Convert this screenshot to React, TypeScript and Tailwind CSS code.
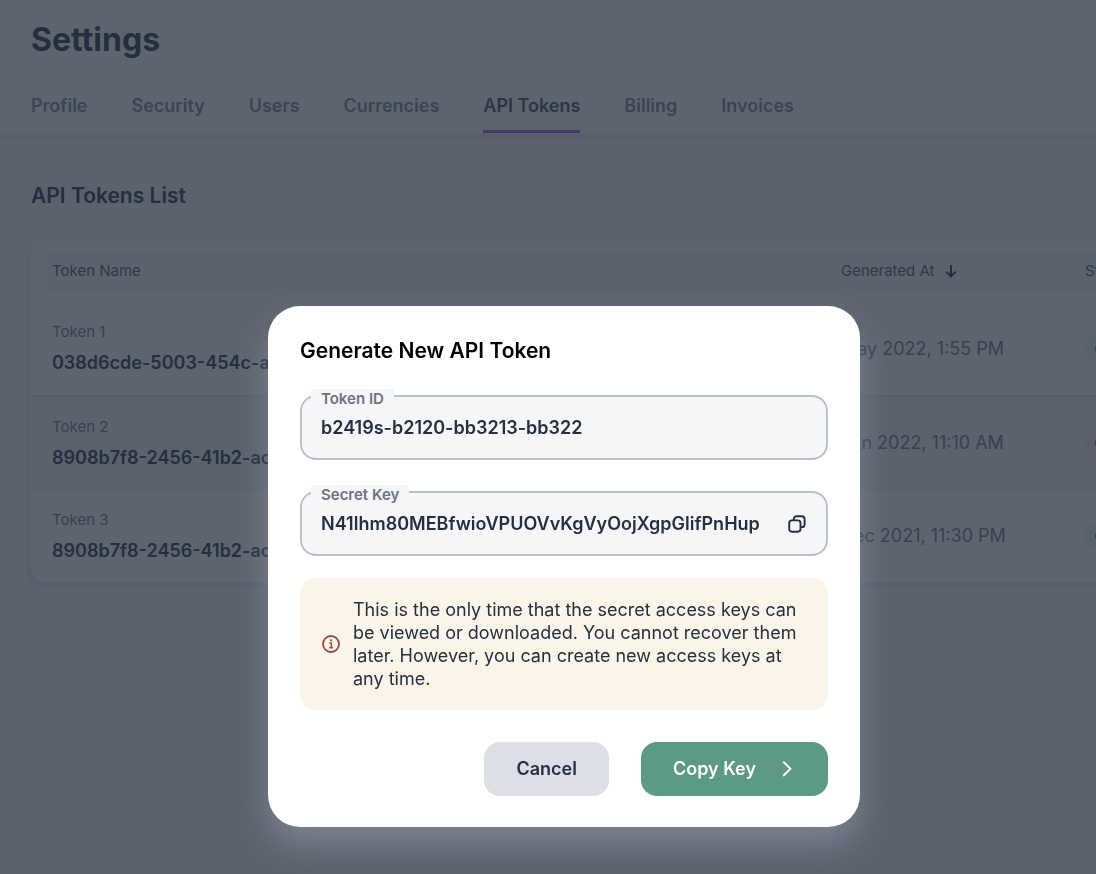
import React, { useState } from "react";

const tabs = ["Profile", "Security", "Users", "Currencies", "API Tokens", "Billing", "Invoices"];

const tokens = [
  { name: "Token 1", id: "038d6cde-5003-454c-a7", date: "May 2022, 1:55 PM", status: "Active" },
  { name: "Token 2", id: "8908b7f8-2456-41b2-ac", date: "Jan 2022, 11:10 AM", status: "Expired" },
  { name: "Token 3", id: "8908b7f8-2456-41b2-ac", date: "Dec 2021, 11:30 PM", status: "Active" },
];

function SortArrow() {
  return (
    <svg className="h-[14px] w-3" viewBox="0 0 12 14" fill="none" stroke="currentColor" strokeWidth="2" aria-hidden="true">
      <path d="M6 1v11.2M1.3 7.8 6 12.4l4.7-4.6" />
    </svg>
  );
}

function CopyIcon() {
  return (
    <svg className="size-[18px]" viewBox="0 0 18 18" fill="none" stroke="currentColor" strokeWidth="1.9" aria-hidden="true">
      <rect x="1.2" y="5.4" width="11.3" height="11.3" rx="2.6" />
      <path d="M5.8 5.4V4a2.7 2.7 0 0 1 2.7-2.7h5.2A2.9 2.9 0 0 1 16.6 4.2v5.2a2.7 2.7 0 0 1-2.7 2.7h-1.4" />
    </svg>
  );
}

function InfoIcon() {
  return (
    <svg className="size-[18px] shrink-0 text-[#964b40]" viewBox="0 0 18 18" fill="none" stroke="currentColor" aria-hidden="true">
      <circle cx="9" cy="9" r="8" strokeWidth="1.8" />
      <path d="M7.3 8h2v4.6M7.2 12.8h3.8" strokeWidth="1.5" />
      <circle cx="9" cy="5.3" r="1.1" fill="currentColor" stroke="none" />
    </svg>
  );
}

function Field({ id, label, value, children }: { id: string; label: string; value: string; children?: React.ReactNode }) {
  return (
    <div className="relative flex h-[65px] items-center rounded-2xl border-2 border-[#bbc1cb] bg-[#f5f6f8] pr-5 pl-[19px]">
      <label htmlFor={id} className="absolute -top-2 left-[9px] bg-[#f5f6f8] px-[10px] text-[15px] leading-5 font-semibold text-[#6b7482]">
        {label}
      </label>
      <input id={id} readOnly value={value} className="min-w-0 flex-1 bg-transparent text-lg font-semibold text-[#252f42] outline-none" />
      {children}
    </div>
  );
}

export default function App() {
  const [active, setActive] = useState("API Tokens");
  return (
    <div className="min-h-screen overflow-hidden bg-[#f5f6f8] font-['Inter',sans-serif] text-[#253044]">
      <header className="bg-white px-[31px] pt-5 shadow-[0_5px_0_#ebebf4]">
        <h1 className="text-[32px] leading-10 font-bold">Settings</h1>
        <nav className="mt-[34px] flex gap-11">
          {tabs.map((t) => (
            <button
              key={t}
              type="button"
              onClick={() => setActive(t)}
              className={
                t === active
                  ? "border-b-3 border-[#9155d8] pb-3 text-lg leading-6 font-semibold text-[#3f4a5c]"
                  : "border-b-3 border-transparent pb-3 text-lg leading-6 font-semibold text-[#788292]"
              }
            >
              {t}
            </button>
          ))}
        </nav>
      </header>

      <main className="pt-[49px] pl-[31px]">
        <h2 className="text-[21px] leading-7 font-semibold">API Tokens List</h2>
        <div className="mt-[30px] w-[1300px] overflow-hidden rounded-2xl bg-white shadow-[-5px_5px_0_#ebebf4]">
          <table className="w-full table-fixed border-collapse text-left">
            <colgroup>
              <col className="w-[810px]" />
              <col className="w-[244px]" />
              <col />
            </colgroup>
            <thead className="text-[15px] text-[#4a5464]">
              <tr>
                <th className="py-[11px] pl-[10px] font-normal">
                  <div className="flex h-10 items-center rounded-l-xl bg-[#f5f6f8] pl-[11px]">Token Name</div>
                </th>
                <th className="py-[11px] font-normal">
                  <div className="flex h-10 items-center gap-[10px] bg-[#f5f6f8]">
                    Generated At
                    <span className="text-[#253044]"><SortArrow /></span>
                  </div>
                </th>
                <th className="py-[11px] pr-[10px] font-normal">
                  <div className="flex h-10 items-center rounded-r-xl bg-[#f5f6f8]">Status</div>
                </th>
              </tr>
            </thead>
            <tbody>
              {tokens.map((t) => (
                <tr key={t.name} className="h-[94px] border-b-2 border-[#e8e8f0] last:h-[92px] last:border-0 even:border-b even:bg-[#f5f6f8]">
                  <td className="pl-[21px]">
                    <div className="text-[15px] leading-5 text-[#6c7585]">{t.name}</div>
                    <div className="mt-[9px] text-lg leading-6 font-semibold">{t.id}</div>
                  </td>
                  <td className="text-lg text-[#6c7585]">{t.date}</td>
                  <td>
                    <span
                      className={
                        t.status === "Active"
                          ? "inline-flex h-7 items-center gap-2 rounded-full bg-[#eef2f3] px-[10px] text-sm text-[#4c8573]"
                          : "inline-flex h-7 items-center gap-2 rounded-full bg-[#fbe6ea] px-[10px] text-sm text-[#9c4050]"
                      }
                    >
                      <span className="size-2 rounded-full bg-current" />
                      {t.status}
                    </span>
                  </td>
                </tr>
              ))}
            </tbody>
          </table>
        </div>
      </main>

      <div className="fixed inset-0 flex items-end justify-center bg-[#242e3d]/74 pb-[47px] pl-8">
        <section
          role="dialog"
          aria-modal="true"
          aria-labelledby="dialog-title"
          className="w-full max-w-[592px] rounded-[32px] bg-white px-8 pt-[31px] pb-[31px] shadow-[0_18px_32px_rgba(186,190,206,0.34)]"
        >
          <h2 id="dialog-title" className="text-[21px] leading-7 font-semibold text-black">Generate New API Token</h2>
          <div className="mt-[30px] flex flex-col gap-[31px]">
            <Field id="token-id" label="Token ID" value="b2419s-b2120-bb3213-bb322" />
            <Field id="secret-key" label="Secret Key" value="N41lhm80MEBfwioVPUOVvKgVyOojXgpGlifPnHup">
              <button type="button" aria-label="Copy secret key" className="ml-4 text-[#252f42]"><CopyIcon /></button>
            </Field>
          </div>
          <div className="mt-[22px] flex items-center gap-[13px] rounded-2xl bg-[#fbf4e8] py-5 pr-5 pl-[22px] text-lg leading-[23px] text-[#252f42]">
            <InfoIcon />
            <p>
              This is the only time that the secret access keys can be viewed or downloaded. You cannot recover them later.
              However, you can create new access keys at any time.
            </p>
          </div>
          <div className="mt-8 flex justify-end gap-8 text-lg font-semibold">
            <button type="button" className="h-[54px] rounded-2xl bg-[#dcdfe5] px-8 text-[#252f42]">Cancel</button>
            <button type="button" className="flex h-[54px] items-center gap-[22px] rounded-2xl bg-[#5c9987] px-8 text-white">
              Copy Key
              <svg className="size-[18px]" viewBox="0 0 18 18" fill="none" stroke="currentColor" strokeWidth="2" aria-hidden="true">
                <path d="m5.2 1.6 7.2 7.2-7.2 7.2" />
              </svg>
            </button>
          </div>
        </section>
      </div>
    </div>
  );
}
